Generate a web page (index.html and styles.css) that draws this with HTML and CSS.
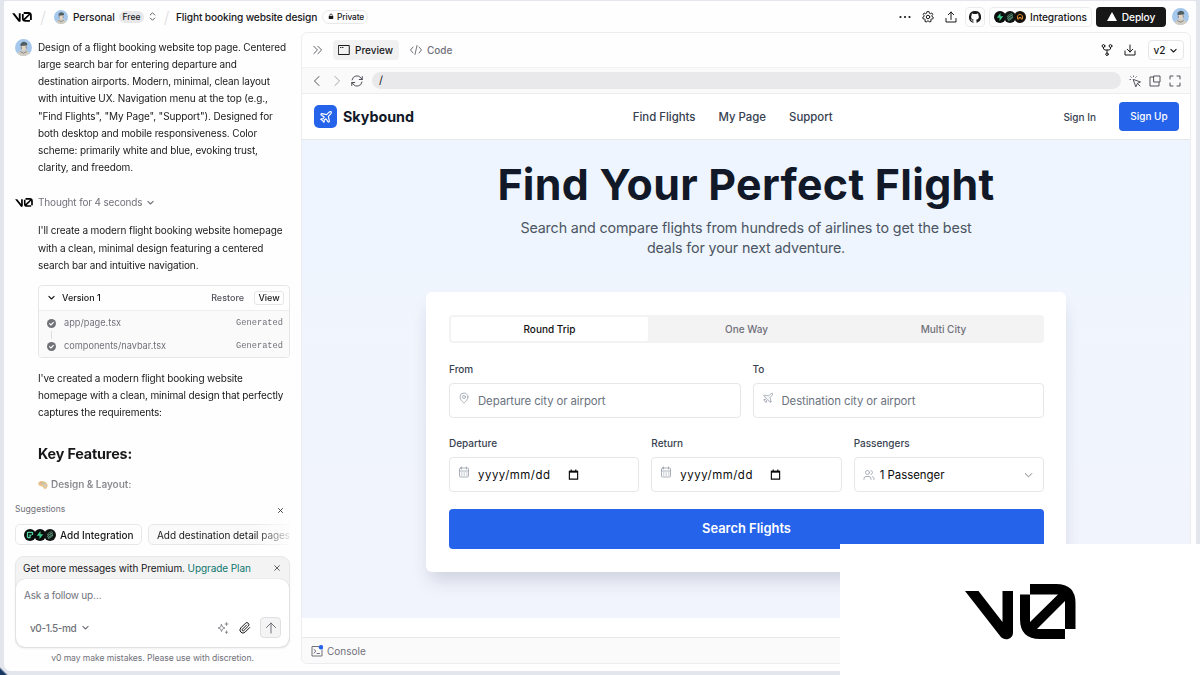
FILE: index.html
```html
<!DOCTYPE html>
<html lang="en">
<head>
    <meta charset="utf-8">
    <title>v0 - Flight booking website design</title>
    <link rel="stylesheet" href="styles.css">
</head>
<body>
    <svg class="sprite">
        <symbol id="v0" viewBox="0 0 111 56"><path fill="currentColor" d="M0 7H13.5L37.5 38V7H48V48.5C48 55.5 39.500 57.500 35.500 52.500ZM65 0H91Q110.500 0 110.500 19V45H100V17L72 45H100V55H75Q55 55 55 35V10.500H65V38L93 10.500H65Z"/></symbol>
        <symbol id="down" viewBox="0 0 24 24"><path d="m5 9 7 7 7-7"/></symbol>
        <symbol id="left" viewBox="0 0 24 24"><path d="m16 3-9 9 9 9"/></symbol>
        <symbol id="right" viewBox="0 0 24 24"><path d="m8 3 9 9-9 9"/></symbol>
        <symbol id="close" viewBox="0 0 24 24"><path d="M5 5l14 14M19 5 5 19"/></symbol>
        <symbol id="plane" viewBox="0 0 24 24"><path d="M17.800 19.200 16 11l3.500-3.500C21 6 21.500 4 21 3c-1-.5-3 0-4.500 1.500L13 8 4.800 6.200c-.5-.1-.9.1-1.100.5l-.3.500c-.2.5-.1 1 .3 1.300L9 12l-2 3H4l-1 1 3 2 2 3 1-1v-3l3-2 3.500 5.300c.3.400.8.500 1.300.3l.5-.2c.4-.3.600-.7.500-1.200z"/></symbol>
        <symbol id="calendar" viewBox="0 0 24 24"><path d="M7 2v4M17 2v4M3 10h18M5 4h14a2 2 0 0 1 2 2v14a2 2 0 0 1-2 2H5a2 2 0 0 1-2-2V6a2 2 0 0 1 2-2zM7 14h1M12 14h1M17 14h1M7 18h1M12 18h1M17 18h1"/></symbol>
        <symbol id="date" viewBox="0 0 24 24"><path fill="none" stroke="currentColor" stroke-width="2.500" d="M3 5h18v17H3zM7 1v4M17 1v4"/><path fill="currentColor" d="M3 4h18v4H3z"/></symbol>
        <symbol id="check" viewBox="0 0 24 24"><circle cx="12" cy="12" r="12" fill="currentColor" stroke="none"/><path stroke="#fff" stroke-width="3" d="m7 12.500 3.500 3.500 6.500-7"/></symbol>
        <symbol id="avatar" viewBox="0 0 24 24"><circle cx="12" cy="12" r="12" fill="#a5c8ec" stroke="none"/><path d="M4 21c1-4 4-5 6-5l1-3h3l1 3c3 0 5 2 5.500 4.500A12 12 0 0 1 4 21z" fill="#d0cdc0" stroke="none"/><ellipse cx="12.500" cy="10.500" rx="4" ry="5" fill="#e3d6c5" stroke="none"/><path d="M7.500 9c0-6 9-7 10-1l-1 1-8 1z" fill="#515e61" stroke="none"/><path d="M9 11v2.500M15.500 10.500 16 13M8 18l4 2 4-2" stroke="#667" stroke-width="1"/></symbol>
        <symbol id="bolt" viewBox="0 0 24 24"><circle cx="12" cy="12" r="12" fill="#0b0d0c" stroke="none"/><path d="M13 4 5.500 13.500H11V20l7.500-9.500H13z" fill="#3ecf8e" stroke="none"/></symbol>
        <symbol id="neon" viewBox="0 0 24 24"><circle cx="12" cy="12" r="12" fill="#0b0d0c" stroke="none"/><path d="M17 12v-4.500a1 1 0 0 0-1-1H8a1 1 0 0 0-1 1V16a1 1 0 0 0 1 1h4v-5h3" fill="none" stroke="#4fd8a4" stroke-width="2.500"/></symbol>
        <symbol id="stack" viewBox="0 0 24 24"><circle cx="12" cy="12" r="12" fill="#101513" stroke="none"/><path d="m7 10 8-5 2 2-9 6zM7 14l9-6 1 3-9 6zM8 18l9-6v2l-7 5z" fill="none" stroke="#5d9a7f" stroke-width="1.500"/></symbol>
        <symbol id="orange" viewBox="0 0 24 24"><circle cx="12" cy="12" r="12" fill="#15110c" stroke="none"/><path d="M7 16v-4c0-7 10-7 10 0v4h-3v-3h-4v3z" fill="none" stroke="#e08a30" stroke-width="2"/></symbol>
    </svg>

    <div class="window">
        <header class="topbar">
            <svg class="logo"><use href="#v0"/></svg>
            <span class="slash">/</span>
            <svg class="icon avatar-sm"><use href="#avatar"/></svg>
            <span class="team">Personal</span>
            <span class="badge">Free</span>
            <svg class="icon updown" viewBox="0 0 24 24"><path d="m6 8 6-6 6 6M6 16l6 6 6-6"/></svg>
            <span class="slash slash-two">/</span>
            <span class="project">Flight booking website design</span>
            <span class="private">
                <svg viewBox="0 0 24 24"><path d="M7 11V7a5 5 0 0 1 10 0v4" fill="none" stroke="currentColor" stroke-width="3"/><rect x="3" y="10" width="18" height="12" rx="2" fill="currentColor"/></svg>
                Private
            </span>
            <div class="top-actions">
                <svg class="icon dots" viewBox="0 0 24 24"><g fill="currentColor" stroke="none"><circle cx="3" cy="12" r="2.200"/><circle cx="12" cy="12" r="2.200"/><circle cx="21" cy="12" r="2.200"/></g></svg>
                <svg class="icon gear" viewBox="0 0 24 24"><path d="m10 1.500-.8 3-2 .9-2.700-1.500-2 2.800 1.700 2.400-.2 1.900L1.500 12.500l.7 3.200 3 .3 1.200 1.600-.6 3 3.200 1.600 2-2.400h2l2 2.400 3.200-1.600-.6-3 1.200-1.600 3-.3.700-3.200L20 11l-.2-1.900 1.700-2.400-2-2.800-2.700 1.500-2-.9-.8-3z"/><circle cx="12" cy="12" r="3.500"/></svg>
                <svg class="icon share" viewBox="0 0 24 24"><path d="M12 17V2M6.500 7.500 12 2l5.500 5.500M2 15v7h20v-7"/></svg>
                <span class="square"><svg viewBox="0 0 16 16"><path fill="currentColor" d="M8 0a8 8 0 0 0-2.530 15.590c.4.070.55-.17.550-.38v-1.330c-2.230.48-2.700-1.080-2.700-1.080-.36-.92-.89-1.170-.89-1.170-.72-.5.060-.49.060-.49.800.060 1.220.82 1.220.82.720 1.230 1.880.87 2.340.67.070-.52.280-.87.500-1.070-1.780-.2-3.640-.89-3.640-3.950 0-.87.310-1.590.82-2.150-.08-.2-.36-1.020.080-2.120 0 0 .67-.21 2.200.82a7.600 7.600 0 0 1 4 0c1.530-1.030 2.200-.82 2.200-.82.440 1.100.160 1.920.080 2.120.51.560.82 1.280.82 2.150 0 3.070-1.870 3.750-3.650 3.950.29.250.54.730.54 1.480v2.200c0 .21.150.46.550.38A8 8 0 0 0 8 0z"/></svg></span>
                <span class="integrations">
                    <span class="coins"><svg><use href="#bolt"/></svg><svg><use href="#stack"/></svg><svg><use href="#orange"/></svg></span>
                    Integrations
                </span>
                <span class="deploy"><svg viewBox="0 0 10 9"><path fill="currentColor" d="m5 0 5 9H0z"/></svg>Deploy</span>
                <svg class="icon avatar-lg"><use href="#avatar"/></svg>
            </div>
        </header>

        <div class="main">
            <aside class="chat">
                <div class="messages">
                    <div class="message user-message">
                        <svg class="icon avatar-lg"><use href="#avatar"/></svg>
                        <p>Design of a flight booking website top page. Centered<br>large search bar for entering departure and<br>destination airports. Modern, minimal, clean layout<br>with intuitive UX. Navigation menu at the top (e.g.,<br>"Find Flights", "My Page", "Support"). Designed for<br>both desktop and mobile responsiveness. Color<br>scheme: primarily white and blue, evoking trust,<br>clarity, and freedom.</p>
                    </div>
                    <div class="thought">
                        <svg class="logo"><use href="#v0"/></svg>
                        <span>Thought for 4 seconds</span>
                        <svg class="icon tiny"><use href="#down"/></svg>
                    </div>
                    <div class="reply">
                        <p>I'll create a modern flight booking website homepage<br>with a clean, minimal design featuring a centered<br>search bar and intuitive navigation.</p>
                        <div class="version">
                            <div class="version-head">
                                <svg class="icon tiny"><use href="#down"/></svg>
                                <span class="version-name">Version 1</span>
                                <span class="restore">Restore</span>
                                <span class="view">View</span>
                            </div>
                            <div class="files">
                                <div class="file"><svg class="icon"><use href="#check"/></svg><span>app/page.tsx</span><code>Generated</code></div>
                                <div class="file-line"></div>
                                <div class="file"><svg class="icon"><use href="#check"/></svg><span>components/navbar.tsx</span><code>Generated</code></div>
                            </div>
                        </div>
                        <p>I've created a modern flight booking website<br>homepage with a clean, minimal design that perfectly<br>captures the requirements:</p>
                        <h2>Key Features:</h2>
                        <div class="feature">
                            <svg viewBox="0 0 24 24"><path d="M1 7c4-8 19-5 22 5 1 7-4 11-8 9-3-2-1-4-4-5-6-1-12-3-10-9z" fill="#dba658"/><circle cx="7" cy="8" r="2.500" fill="#d88a66"/><circle cx="13" cy="8" r="2.500" fill="#7b9"/><circle cx="18" cy="13" r="2.500" fill="#8bc"/></svg>
                            Design &amp; Layout:
                        </div>
                    </div>
                </div>

                <div class="suggestions-head"><span>Suggestions</span><svg class="icon"><use href="#close"/></svg></div>
                <div class="suggestions">
                    <span class="chip chip-integration">
                        <span class="coins"><svg><use href="#neon"/></svg><svg><use href="#bolt"/></svg><svg><use href="#stack"/></svg></span>
                        Add Integration
                    </span>
                    <span class="chip chip-pages">Add destination detail pages</span>
                </div>
                <div class="composer">
                    <div class="upsell"><span>Get more messages with Premium. <a>Upgrade Plan</a></span><svg class="icon"><use href="#close"/></svg></div>
                    <div class="prompt">
                        <span class="ask">Ask a follow up…</span>
                        <div class="prompt-tools">
                            <span class="model">v0-1.5-md</span>
                            <svg class="icon tiny"><use href="#down"/></svg>
                            <svg class="icon sparkle" viewBox="0 0 24 24"><path d="m9 5 2 5 5 2-5 2-2 5-2-5-5-2 5-2zM19 1v6M16 4h6M19 18v5M17 20.500h4"/></svg>
                            <svg class="icon clip" viewBox="0 0 24 24"><path d="m21.400 11-9.200 9.200a6 6 0 0 1-8.500-8.500l9.200-9.200a4 4 0 0 1 5.700 5.700l-9.200 9.200a2 2 0 0 1-2.800-2.800l8.500-8.500"/></svg>
                            <span class="send"><svg class="icon" viewBox="0 0 24 24"><path d="M12 22V2M3 11l9-9 9 9"/></svg></span>
                        </div>
                    </div>
                </div>
                <p class="disclaimer">v0 may make mistakes. Please use with discretion.</p>
            </aside>

            <section class="preview">
                <div class="tabs">
                    <svg class="icon collapse" viewBox="0 0 24 24"><path d="m4 4 8 8-8 8M13 4l8 8-8 8"/></svg>
                    <span class="tab tab-active"><svg class="icon" viewBox="0 0 24 24"><path d="M1.500 3h21v18h-21zM5 7h1M9 7h1"/></svg>Preview</span>
                    <span class="tab"><svg class="icon" viewBox="0 0 24 24"><path d="m6 6-5 6 5 6M18 6l5 6-5 6M14 3l-4 18"/></svg>Code</span>
                    <svg class="icon fork" viewBox="0 0 24 24"><circle cx="5" cy="4" r="2.800"/><circle cx="19" cy="4" r="2.800"/><circle cx="12" cy="20.500" r="2.500"/><path d="M5 7v3l3 2h8l3-2V7M12 12v6"/></svg>
                    <svg class="icon download" viewBox="0 0 24 24"><path d="M12 2v14M6.500 10.500 12 16l5.500-5.500M2 14v8h20v-8"/></svg>
                    <span class="release">v2 <svg class="icon"><use href="#down"/></svg></span>
                </div>
                <div class="urlbar">
                    <svg class="icon"><use href="#left"/></svg>
                    <svg class="icon faded"><use href="#right"/></svg>
                    <svg class="icon reload" viewBox="0 0 24 24"><path d="M2 10a10 10 0 0 1 18-4l2.500 3M22.500 3v6h-6M22 14a10 10 0 0 1-18 4l-2.500-3M1.500 21v-6h6"/></svg>
                    <span class="url">/</span>
                    <svg class="icon" viewBox="0 0 24 24"><path d="m9 9 14 5-6 2.500L14 23zM17 17l5 5M2 9h1M9 2v1M3.500 3.500l1 1M14.500 3.500l-1 1"/></svg>
                    <svg class="icon" viewBox="0 0 24 24"><path d="M9 4H2v18h18v-7M10 2h12v12H10z"/></svg>
                    <svg class="icon" viewBox="0 0 24 24"><path d="M2 8V2h6M16 2h6v6M22 16v6h-6M8 22H2v-6"/></svg>
                </div>

                <div class="site">
                    <nav class="site-nav">
                        <div class="brand"><span class="brand-mark"><svg class="icon"><use href="#plane"/></svg></span>Skybound</div>
                        <div class="links"><a>Find Flights</a><a>My Page</a><a>Support</a></div>
                        <div class="account"><a class="signin">Sign In</a><span class="signup">Sign Up</span></div>
                    </nav>
                    <div class="hero">
                        <h1>Find Your Perfect Flight</h1>
                        <p>Search and compare flights from hundreds of airlines to get the best<br>deals for your next adventure.</p>
                        <div class="search-card">
                            <div class="trip-tabs"><span class="trip-active">Round Trip</span><span>One Way</span><span>Multi City</span></div>
                            <div class="row airports">
                                <div class="field"><label>From</label><div class="control placeholder"><svg class="icon raised" viewBox="0 0 24 24"><path d="M20 10c0 5-5.500 10.200-7.400 11.800a1 1 0 0 1-1.200 0C9.500 20.200 4 15 4 10a8 8 0 0 1 16 0z"/><circle cx="12" cy="10" r="3"/></svg>Departure city or airport</div></div>
                                <div class="field"><label>To</label><div class="control placeholder"><svg class="icon raised"><use href="#plane"/></svg>Destination city or airport</div></div>
                            </div>
                            <div class="row details">
                                <div class="field"><label>Departure</label><div class="control date"><svg class="icon raised"><use href="#calendar"/></svg>yyyy/mm/dd<svg class="picker"><use href="#date"/></svg></div></div>
                                <div class="field"><label>Return</label><div class="control date"><svg class="icon raised"><use href="#calendar"/></svg>yyyy/mm/dd<svg class="picker"><use href="#date"/></svg></div></div>
                                <div class="field"><label>Passengers</label><div class="control people"><svg class="icon" viewBox="0 0 24 24"><path d="M16 21v-2a4 4 0 0 0-4-4H6a4 4 0 0 0-4 4v2M16 3.100a4 4 0 0 1 0 7.800M22 21v-2a4 4 0 0 0-3-3.900"/><circle cx="9" cy="7" r="4"/></svg>1 Passenger<svg class="icon chevron"><use href="#down"/></svg></div></div>
                            </div>
                            <div class="search-button">Search Flights</div>
                        </div>
                    </div>
                </div>
                <div class="console">
                    <svg class="icon" viewBox="0 0 24 24"><path d="M15 3H2v19h20V10M6 9l4 3.500L6 16M12 17h5"/><circle cx="20" cy="4.500" r="4.500" fill="#2563eb" stroke="none"/></svg>
                    Console
                </div>
            </section>
        </div>
    </div>
    <div class="watermark"><svg><use href="#v0"/></svg></div>
</body>
</html>
```
FILE: styles.css
```css
* {
    box-sizing: border-box;
}
body {
    margin: 0;
    width: 1200px;
    height: 675px;
    overflow: hidden;
    padding: 1px 4px 4px;
    background: linear-gradient(45deg, #173763 4px, #e3e6ec 6px);
    font-family: Inter, "Liberation Sans", sans-serif;
    font-size: 10px;
    color: #18181b;
}
p, h1, h2 {
    margin: 0;
}
svg {
    flex: none;
    display: block;
}
.sprite {
    position: absolute;
    width: 0;
    height: 0;
}
.icon {
    width: 12px;
    height: 12px;
    fill: none;
    stroke: currentColor;
    stroke-width: 2;
    stroke-linecap: round;
    stroke-linejoin: round;
}
.icon.tiny {
    width: 9px;
    height: 9px;
    stroke-width: 3;
}
.window {
    height: 670px;
    background: #fefefe;
    border-radius: 2px 2px 7px 7px;
    overflow: hidden;
}

/* top bar */
.topbar {
    display: flex;
    align-items: center;
    height: 31px;
    padding: 0 7px 0 8px;
    font-weight: 500;
    font-size: 10.200px;
}
.logo {
    width: 20px;
    height: 10px;
    color: #000;
}
.slash {
    width: 22px;
    text-align: center;
    font-size: 16px;
    font-weight: 300;
    color: #dedee2;
}
.icon.avatar-sm {
    width: 14px;
    height: 14px;
}
.icon.avatar-lg {
    width: 17px;
    height: 17px;
}
.team {
    margin-left: 5px;
    width: 41px;
    white-space: nowrap;
    letter-spacing: -0.1px;
}
.badge {
    margin-left: 5px;
    width: 25px;
    height: 12px;
    line-height: 12px;
    border-radius: 6px;
    background: #e8e8ea;
    font-size: 8.500px;
    text-align: center;
}
.updown {
    width: 9px;
    height: 9px;
    margin-left: 4px;
    color: #555;
    stroke-width: 2.5;
}
.slash-two {
    width: 19px;
}
.project {
    width: 141px;
    white-space: nowrap;
    letter-spacing: -0.140px;
}
.private {
    display: flex;
    align-items: center;
    gap: 3px;
    margin-left: 5px;
    width: 46px;
    height: 14px;
    padding-left: 5px;
    border: 1px solid #e8e8ea;
    border-radius: 7px;
    font-size: 8.300px;
    letter-spacing: -0.1px;
}
.private svg {
    width: 6px;
    height: 7px;
}
.top-actions {
    display: flex;
    align-items: center;
    margin-left: auto;
}
.gear {
    margin-left: 11px;
}
.share {
    margin-left: 11px;
}
.square {
    display: grid;
    place-items: center;
    width: 20px;
    height: 20px;
    margin-left: 8px;
    border: 1px solid #ececee;
    border-radius: 4px;
}
.square svg {
    width: 12px;
    height: 12px;
}
.integrations {
    display: flex;
    align-items: center;
    gap: 4px;
    width: 103px;
    height: 20px;
    margin-left: 4px;
    padding-left: 4px;
    border: 1px solid #ececee;
    border-radius: 4px;
    letter-spacing: -0.1px;
}
.coins {
    display: flex;
}
.coins svg {
    width: 12px;
    height: 12px;
}
.coins svg + svg {
    margin-left: -2px;
}
.deploy {
    display: flex;
    align-items: center;
    justify-content: center;
    gap: 5px;
    width: 70px;
    height: 20px;
    margin: 0 6px 0 4px;
    border-radius: 4px;
    background: #171717;
    color: #fff;
    letter-spacing: -0.1px;
}
.deploy svg {
    width: 10px;
    height: 9px;
}

/* chat column */
.main {
    display: flex;
    height: 632px;
}
.chat {
    display: flex;
    flex-direction: column;
    width: 297px;
    padding: 0 11px;
}
.messages {
    flex: none;
    height: 465px;
    overflow: hidden;
    line-height: 17.160px;
    letter-spacing: -0.130px;
    mask-image: linear-gradient(#000 430px, rgba(0, 0, 0, 0.6) 457px);
}
.message {
    display: flex;
    gap: 6px;
    padding-top: 7px;
    white-space: nowrap;
}
.thought {
    display: flex;
    align-items: center;
    margin-top: 18px;
    color: #71717a;
}
.thought .logo {
    width: 18px;
    height: 9px;
}
.thought span {
    margin: 0 4px 0 5px;
    letter-spacing: -0.160px;
}
.reply {
    margin-top: 11px;
    padding-left: 23px;
    white-space: nowrap;
}
.version {
    margin: 11px 0 12px;
    border: 1px solid #e6e6e9;
    border-radius: 4px;
    overflow: hidden;
    line-height: 12px;
    letter-spacing: 0;
}
.version-head {
    display: flex;
    align-items: center;
    height: 25px;
    padding: 0 5px 0 8px;
    border-bottom: 1px solid #eeeef0;
    font-size: 9px;
    font-weight: 500;
}
.version-name {
    margin-left: 6px;
}
.restore {
    margin-left: auto;
    color: #52525b;
}
.view {
    width: 30px;
    height: 14px;
    margin-left: 10px;
    border: 1px solid #e6e6e9;
    border-radius: 3px;
    text-align: center;
}
.files {
    height: 46px;
    padding: 6px 6px 0 8px;
    background: #fafafa;
}
.file {
    display: flex;
    align-items: center;
    height: 13px;
    color: #71717a;
    font-size: 9.200px;
}
.file .icon {
    width: 9px;
    height: 9px;
    margin-right: 8px;
}
.file code {
    margin-left: auto;
    font: 8.700px "Liberation Mono", monospace;
}
.file-line {
    width: 1px;
    height: 8px;
    margin: 1px 0 1px 4px;
    background: #dcdce0;
}
.reply h2 {
    margin: 23px 0 12px;
    font-size: 14.300px;
    line-height: 20px;
    font-weight: 700;
}
.feature {
    display: flex;
    align-items: center;
    gap: 3px;
    font-weight: 600;
    color: #52525b;
    letter-spacing: -0.05px;
}
.feature svg {
    width: 10px;
    height: 10px;
}
.suggestions-head {
    display: flex;
    flex: none;
    align-items: center;
    justify-content: space-between;
    height: 24px;
    padding-right: 6px;
    color: #71717a;
    font-size: 8.600px;
}
.suggestions-head .icon {
    width: 7px;
    height: 7px;
    margin-top: 3px;
    color: #333;
    stroke-width: 3;
}
.suggestions {
    display: flex;
    flex: none;
    gap: 6px;
    height: 21px;
    margin-top: 3px;
    overflow: hidden;
    mask-image: linear-gradient(90deg, #000 240px, transparent 280px);
}
.chip {
    display: flex;
    flex: none;
    align-items: center;
    height: 21px;
    padding: 0 8px;
    border: 1px solid #e8e8eb;
    border-radius: 5px;
    font-weight: 500;
    white-space: nowrap;
}
.chip-integration {
    width: 127px;
    gap: 4px;
}
.chip-pages {
    width: 150px;
    background: #fafafa;
    font-weight: 400;
    letter-spacing: -0.05px;
}
.composer {
    flex: none;
    height: 92px;
    margin-top: 11px;
    border: 1px solid #e8e8eb;
    border-radius: 9px;
    background: #f3f3f4;
    box-shadow: 0 1px 2px rgba(0, 0, 0, 0.05);
}
.upsell {
    display: flex;
    align-items: center;
    justify-content: space-between;
    height: 22px;
    padding: 0 8px 0 7px;
    white-space: nowrap;
    letter-spacing: -0.080px;
}
.upsell a {
    color: #0f766e;
}
.upsell .icon {
    width: 8px;
    height: 8px;
}
.prompt {
    height: 68px;
    padding: 10px 8px 0;
    border-radius: 9px;
    background: #fff;
    box-shadow: 0 0 1px rgba(0, 0, 0, 0.25);
    color: #71717a;
}
.ask {
    display: block;
    line-height: 13px;
    letter-spacing: -0.2px;
}
.prompt-tools {
    display: flex;
    align-items: center;
    margin-top: 15px;
    height: 21px;
    font-weight: 500;
}
.model {
    margin: 0 5px 0 6px;
    letter-spacing: -0.4px;
}
.sparkle {
    margin-left: auto;
    stroke-width: 1.5;
}
.clip {
    margin: 0 9px 0 10px;
    color: #18181b;
}
.send {
    display: grid;
    place-items: center;
    width: 21px;
    height: 21px;
    border: 1px solid #e0e0e4;
    border-radius: 4px;
    background: #f4f4f5;
}
.disclaimer {
    margin-top: 4px;
    font-size: 8.600px;
    line-height: 12px;
    letter-spacing: -0.060px;
    text-align: center;
    color: #71717a;
}

/* preview panel */
.preview {
    display: flex;
    flex-direction: column;
    width: 890px;
    border: 1px solid #ededf0;
    border-radius: 6px;
    overflow: hidden;
}
.tabs {
    display: flex;
    align-items: center;
    height: 34px;
    padding: 0 6px 0 10px;
    font-weight: 500;
    color: #71717a;
}
.collapse {
    width: 11px;
    color: #52525b;
}
.tab {
    display: flex;
    align-items: center;
    gap: 5px;
    height: 20px;
    padding: 0 5px;
}
.tab-active {
    width: 66px;
    margin: 0 6px 0 10px;
    border-radius: 4px;
    background: #f1f1f2;
    color: #18181b;
}
.fork {
    margin-left: auto;
    color: #18181b;
}
.download {
    margin: 0 12px 0 11px;
    color: #18181b;
}
.release {
    display: flex;
    align-items: center;
    justify-content: center;
    gap: 4px;
    width: 36px;
    height: 20px;
    border: 1px solid #e6e6e9;
    border-radius: 4px;
    color: #18181b;
}
.release .icon {
    width: 9px;
    height: 9px;
    stroke-width: 3;
}
.urlbar {
    display: flex;
    align-items: center;
    gap: 8px;
    height: 27px;
    padding: 0 9px 0 9px;
    border-top: 1px solid #f1f1f3;
    border-bottom: 1px solid #ededf0;
    background: #fafafa;
    color: #52525b;
}
.urlbar .faded {
    color: #a1a1aa;
}
.urlbar .reload {
    margin-right: 1px;
}
.url {
    flex: 1;
    height: 17px;
    line-height: 17px;
    padding-left: 7px;
    border-radius: 9px;
    background: #e9e9eb;
    color: #18181b;
    font-size: 11px;
}
.site {
    flex: 1;
    background: #fff;
}
.site-nav {
    display: flex;
    justify-content: space-between;
    align-items: center;
    height: 46px;
    padding: 0 11px 0 12px;
    border-bottom: 1px solid #e5e7eb;
    font-weight: 500;
}
.brand {
    display: flex;
    align-items: center;
    gap: 6px;
    font-size: 14.300px;
    font-weight: 700;
    color: #111827;
}
.brand-mark {
    display: grid;
    place-items: center;
    width: 23px;
    height: 23px;
    border-radius: 5px;
    background: #2563eb;
    color: #fff;
}
.brand-mark .icon {
    width: 14px;
    height: 14px;
}
.links {
    display: flex;
    gap: 23px;
    font-size: 11.400px;
    color: #374151;
}
.account {
    display: flex;
    align-items: center;
    gap: 11px;
    color: #374151;
}
.signin {
    padding: 0 12px;
}
.signup {
    width: 60px;
    height: 29px;
    line-height: 29px;
    border-radius: 4px;
    background: #2563eb;
    color: #fff;
    text-align: center;
}
.hero {
    height: 478px;
    padding: 23px 0 0;
    background: linear-gradient(#eef5fe, #f2f4fd);
    text-align: center;
}
.hero h1 {
    font-size: 42.900px;
    line-height: 43px;
    font-weight: 700;
    letter-spacing: 0.3px;
    color: #111827;
}
.hero > p {
    margin-top: 12px;
    font-size: 14.300px;
    line-height: 20px;
    letter-spacing: -0.150px;
    color: #4b5563;
}
.search-card {
    width: 640px;
    height: 280px;
    margin: 34px auto 0;
    padding: 23px 22px 23px 23px;
    border-radius: 6px;
    background: #fff;
    box-shadow: 0 12px 18px -4px rgba(30, 41, 59, 0.17);
    text-align: left;
}
.trip-tabs {
    display: grid;
    grid-template-columns: repeat(3, 1fr);
    height: 28px;
    padding: 2px;
    border-radius: 4px;
    background: #f3f3f4;
    font-weight: 500;
    line-height: 24px;
    text-align: center;
    color: #71717a;
}
.trip-active {
    border-radius: 2px;
    background: #fff;
    color: #111;
}
.row {
    display: grid;
    gap: 12px;
}
.airports {
    grid-template-columns: 1fr 1fr;
    margin-top: 20px;
}
.details {
    grid-template-columns: 1fr 1fr 1fr;
    margin-top: 19px;
}
.field label {
    display: block;
    margin-bottom: 7px;
    line-height: 13px;
    font-weight: 500;
    color: #374151;
}
.control {
    display: flex;
    align-items: center;
    height: 35px;
    padding: 0 9px 0 8px;
    border: 1px solid #e5e7eb;
    border-radius: 4px;
    background: #fff;
    font-size: 11.400px;
    color: #0a0a0a;
}
.control .icon {
    margin-right: 8px;
    color: #9ca3af;
    stroke-width: 1.7;
}
.control .raised {
    margin-top: -6px;
}
.control.placeholder {
    color: #6b7280;
    letter-spacing: -0.1px;
}
.control.date {
    letter-spacing: 0.550px;
}
.picker {
    width: 11px;
    height: 11px;
    margin-left: 17px;
}
.control.people .icon {
    margin-right: 5px;
}
.control.people .chevron {
    width: 11px;
    margin: 0 0 0 auto;
    color: #71717a;
    stroke-width: 2;
}
.search-button {
    height: 40px;
    margin-top: 17px;
    border-radius: 4px;
    background: #2563eb;
    color: #fff;
    font-size: 12.900px;
    font-weight: 600;
    line-height: 40px;
    text-align: center;
}
.console {
    display: flex;
    align-items: center;
    gap: 4px;
    height: 26px;
    padding-left: 9px;
    border-top: 1px solid #e8e8eb;
    background: #fafafa;
    color: #71717a;
}

/* logo card laid over the bottom right of the window */
.watermark {
    position: absolute;
    left: 840px;
    top: 544px;
    display: grid;
    place-items: center;
    width: 360px;
    height: 131px;
    padding: 5px 0 0;
    background: #fff;
    color: #000;
}
.watermark svg {
    width: 111px;
    height: 56px;
}
```
